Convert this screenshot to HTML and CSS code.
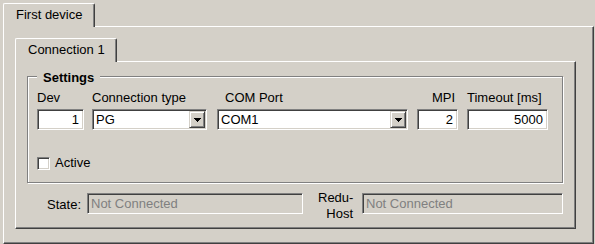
FILE: index.html
```html
<!DOCTYPE html>
<html lang="en">
<head>
    <meta charset="UTF-8">
    <title>Device settings</title>
    <link rel="stylesheet" href="styles.css">
</head>
<body>

    <div class="tabs">
        <div class="tab tab-device">First device</div>
    </div>
    <div class="panel panel-outer">
        <div class="tabs">
            <div class="tab tab-conn">Connection 1</div>
        </div>
        <div class="panel panel-inner">

            <div class="group">
                <div class="group-title">Settings</div>
                <div class="fields">
                    <div class="field f-dev">
                        <label>Dev</label>
                        <div class="edit num">1</div>
                    </div>
                    <div class="field f-type">
                        <label>Connection type</label>
                        <div class="edit combo">
                            <span class="combo-text">PG</span>
                            <span class="combo-btn">
                                <svg width="7" height="4" viewBox="0 0 7 4"><path d="M0 0h7v1H0zM1 1h5v1H1zM2 2h3v1H2zM3 3h1v1H3z" fill="#000"/></svg>
                            </span>
                        </div>
                    </div>
                    <div class="field f-com">
                        <label>COM Port</label>
                        <div class="edit combo">
                            <span class="combo-text">COM1</span>
                            <span class="combo-btn">
                                <svg width="7" height="4" viewBox="0 0 7 4"><path d="M0 0h7v1H0zM1 1h5v1H1zM2 2h3v1H2zM3 3h1v1H3z" fill="#000"/></svg>
                            </span>
                        </div>
                    </div>
                    <div class="field f-mpi">
                        <label>MPI</label>
                        <div class="edit num">2</div>
                    </div>
                    <div class="field f-timeout">
                        <label>Timeout [ms]</label>
                        <div class="edit num">5000</div>
                    </div>
                </div>
                <div class="check">
                    <span class="check-box"></span>
                    <span>Active</span>
                </div>
            </div>

            <div class="status">
                <div class="status-label state-label">State:</div>
                <div class="edit disabled state-field">Not Connected</div>
                <div class="status-label redu-label">Redu-<br>Host</div>
                <div class="edit disabled redu-field">Not Connected</div>
            </div>

        </div>
    </div>

</body>
</html>
```

FILE: styles.css
```css
body {
    margin: 0;
    padding: 3px 0 0 3px;
    background-color: #d4d0c8;
    color: #000;
    font-family: "Liberation Sans", Arial, sans-serif;
    font-size: 13px;
    line-height: 15px;
}

/* tabs */

.tabs {
    display: flex;
    height: 23px;
}

.tab {
    box-sizing: border-box;
    height: 24px;
    margin-bottom: -1px;
    position: relative;
    z-index: 1;
    padding: 3px 0 0 12px;
    background-color: #d4d0c8;
    border: 1px solid #fff;
    border-bottom: none;
    border-right-color: #404040;
    border-radius: 2px 2px 0 0;
    box-shadow: inset -1px 0 #808080;
}

.tab-device {
    width: 92px;
}

.tab-conn {
    width: 102px;
}

.panel {
    box-sizing: border-box;
    border: 1px solid;
    border-color: #fff #404040 #404040 #fff;
    box-shadow: inset -1px -1px #808080;
}

.panel-outer {
    width: 591px;
    height: 218px;
    padding: 11px 0 0 11px;
}

.panel-inner {
    width: 561px;
    height: 168px;
    padding: 0 0 0 11px;
}

/* group box */

.group {
    box-sizing: border-box;
    width: 536px;
    height: 107px;
    margin-top: 14px;
    padding: 0 0 0 9px;
    border: 1px solid #808080;
    box-shadow: inset 1px 1px #fff, 1px 1px #fff;
}

.group-title {
    width: fit-content;
    height: 15px;
    margin-top: -7px;
    padding: 0 6px;
    background-color: #d4d0c8;
    font-weight: bold;
}

.fields {
    display: flex;
    margin-top: 5px;
}

.field {
    display: flex;
    flex-direction: column;
}

.field label {
    height: 15px;
    margin-bottom: 4px;
}

.f-dev { width: 47px; }
.f-type { width: 115px; margin-left: 8px; }
.f-com { width: 191px; margin-left: 10px; }
.f-com label { padding-left: 8px; }
.f-mpi { width: 41px; margin-left: 9px; }
.f-mpi label { text-align: right; padding-right: 3px; }
.f-timeout { width: 81px; margin-left: 9px; }

/* edit boxes */

.edit {
    box-sizing: border-box;
    height: 21px;
    padding: 2px 4px 0 3px;
    background-color: #fff;
    border: 1px solid;
    border-color: #808080 #fff #fff #808080;
    box-shadow: inset 1px 1px #404040, inset -1px -1px #d4d0c8;
    white-space: nowrap;
}

.edit.num {
    text-align: right;
}

.edit.disabled {
    background-color: #d4d0c8;
    color: #808080;
}

.combo {
    display: flex;
    padding: 1px;
}

.combo-text {
    flex: 1;
    padding: 1px 0 0 2px;
}

.combo-btn {
    box-sizing: border-box;
    width: 16px;
    height: 17px;
    display: flex;
    align-items: center;
    justify-content: center;
    background-color: #d4d0c8;
    border: 1px solid;
    border-color: #d4d0c8 #404040 #404040 #d4d0c8;
    box-shadow: inset 1px 1px #fff, inset -1px -1px #808080;
}

.combo-btn svg {
    display: block;
}

/* checkbox */

.check {
    display: flex;
    height: 15px;
    margin-top: 25px;
}

.check-box {
    box-sizing: border-box;
    width: 13px;
    height: 13px;
    margin: 2px 5px 0 0;
    background-color: #fff;
    border: 1px solid;
    border-color: #808080 #fff #fff #808080;
    box-shadow: inset 1px 1px #404040, inset -1px -1px #d4d0c8;
}

/* status row */

.status {
    display: flex;
    align-items: flex-start;
    margin-top: 7px;
}

.status-label {
    text-align: right;
}

.state-label {
    width: 40px;
    margin: 7px 0 0 14px;
}

.state-field {
    width: 216px;
    margin: 3px 0 0 6px;
}

.redu-label {
    width: 35px;
    margin-left: 15px;
    line-height: 16px;
}

.redu-field {
    width: 201px;
    margin: 3px 0 0 9px;
}
```
